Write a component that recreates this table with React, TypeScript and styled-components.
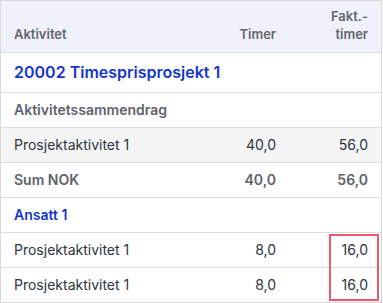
import React from 'react';
import styled, { createGlobalStyle } from 'styled-components';

const GlobalStyle = createGlobalStyle`
  body {
    margin: 0;
    background: #ffffff;
    font-family: Inter, "Noto Sans", sans-serif;
  }
`;

const Frame = styled.div`
  position: relative;
  width: 382px;
  box-sizing: border-box;
  border: 1px solid #d9d9dc;
`;

const Table = styled.table`
  width: 100%;
  border-collapse: collapse;
  table-layout: fixed;
`;

const HeadRow = styled.tr`
  height: 51px;
  background: #f0f2fb;
`;

const HeadCell = styled.th<{ $num?: boolean; $width?: number }>`
  width: ${(p) => (p.$width ? `${p.$width}px` : 'auto')};
  padding: 0 13px 9px;
  vertical-align: bottom;
  text-align: ${(p) => (p.$num ? 'right' : 'left')};
  font-size: 13px;
  font-weight: 600;
  line-height: 18px;
  color: #626670;
`;

const Row = styled.tr<{ $shaded?: boolean; $tall?: boolean }>`
  height: ${(p) => (p.$tall ? 40 : 35)}px;
  background: ${(p) => (p.$shaded ? '#f5f5f6' : '#ffffff')};
  border-top: 1px solid #dedee0;
`;

const Cell = styled.td<{ $num?: boolean; $tone?: 'title' | 'group' | 'label' | 'plain' }>`
  padding: 0 13px;
  text-align: ${(p) => (p.$num ? 'right' : 'left')};
  white-space: nowrap;
  font-size: ${(p) => (p.$tone === 'title' ? '16px' : '14px')};
  font-weight: ${(p) => (p.$tone && p.$tone !== 'plain' ? 600 : 400)};
  color: ${(p) =>
    p.$tone === 'title' || p.$tone === 'group'
      ? '#1436c9'
      : p.$tone === 'label'
        ? '#5f636b'
        : '#2e3440'};
`;

// red marker drawn over the invoiced-hours cells of the last two rows
const Highlight = styled.div`
  position: absolute;
  left: 328px;
  top: 233px;
  width: 50px;
  height: 67px;
  box-sizing: border-box;
  border: 2px solid #e85a6c;
  pointer-events: none;
`;

const App = (): React.ReactElement => {
  return (
    <>
      <GlobalStyle />
      <Frame>
        <Table>
          <thead>
            <HeadRow>
              <HeadCell>Aktivitet</HeadCell>
              <HeadCell $num $width={70}>Timer</HeadCell>
              <HeadCell $num $width={66}>
                Fakt.-
                <br />
                timer
              </HeadCell>
            </HeadRow>
          </thead>
          <tbody>
            <Row $tall>
              <Cell $tone="title" colSpan={3}>20002 Timesprisprosjekt 1</Cell>
            </Row>
            <Row>
              <Cell $tone="label" colSpan={3}>Aktivitetssammendrag</Cell>
            </Row>
            <Row $shaded>
              <Cell>Prosjektaktivitet 1</Cell>
              <Cell $num>40,0</Cell>
              <Cell $num>56,0</Cell>
            </Row>
            <Row>
              <Cell $tone="label">Sum NOK</Cell>
              <Cell $num $tone="label">40,0</Cell>
              <Cell $num $tone="label">56,0</Cell>
            </Row>
            <Row>
              <Cell $tone="group" colSpan={3}>Ansatt 1</Cell>
            </Row>
            <Row>
              <Cell>Prosjektaktivitet 1</Cell>
              <Cell $num>8,0</Cell>
              <Cell $num>16,0</Cell>
            </Row>
            <Row>
              <Cell>Prosjektaktivitet 1</Cell>
              <Cell $num>8,0</Cell>
              <Cell $num>16,0</Cell>
            </Row>
          </tbody>
        </Table>
        <Highlight />
      </Frame>
    </>
  );
};

export default App;
